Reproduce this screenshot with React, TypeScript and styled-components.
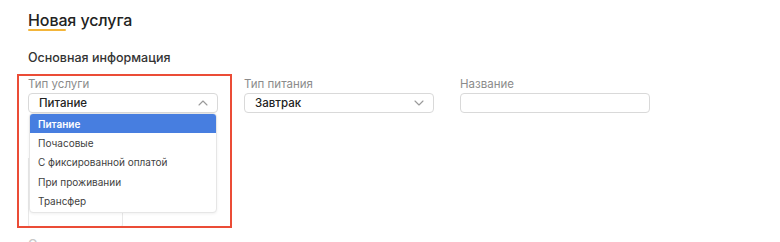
import React from "react";
import styled, { createGlobalStyle } from "styled-components";

const Global = createGlobalStyle`
  html, body { margin: 0; padding: 0; background: #fff; }
  body { font-family: Inter, "Noto Sans", sans-serif; color: #222; overflow: hidden; }
  * { box-sizing: border-box; }
`;

const Page = styled.div`
  position: relative;
  width: 780px;
  height: 242px;
  padding: 10px 28px 0 28px;
  overflow: hidden;
`;

const Title = styled.h1`
  position: relative;
  display: inline-block;
  margin: 0;
  font-size: 16px;
  line-height: 20px;
  font-weight: 500;
  color: #222;
  letter-spacing: -0.1px;
  &::after {
    content: "";
    position: absolute;
    left: 0;
    top: 19px;
    width: 38px;
    height: 1.5px;
    background: #f3b53a;
    border-radius: 1px;
  }
`;

const Section = styled.h2`
  margin: 20px 0 0 0;
  font-size: 12.5px;
  line-height: 16px;
  font-weight: 500;
  color: #333;
`;

const Row = styled.div`
  display: grid;
  grid-template-columns: 190px 190px 190px;
  column-gap: 26px;
  margin-top: 11px;
`;

const Field = styled.div`
  position: relative;
  display: flex;
  flex-direction: column;
`;

const Label = styled.div`
  font-size: 11.5px;
  line-height: 14px;
  color: #8b8b8b;
  margin-bottom: 2px;
`;

const Control = styled.div`
  height: 20px;
  border: 1px solid #d9d9d9;
  border-radius: 4px;
  display: flex;
  align-items: center;
  justify-content: space-between;
  padding: 0 9px 0 10px;
  font-size: 11.5px;
  font-weight: 500;
  color: #222;
  background: #fff;
`;

const Chevron = ({ up }: { up?: boolean }) => (
  <svg width="10" height="6" viewBox="0 0 10 6" fill="none">
    <path
      d={up ? "M1 5 L5 1 L9 5" : "M1 1 L5 5 L9 1"}
      stroke="#9a9a9a"
      strokeWidth="1.1"
      strokeLinecap="round"
      strokeLinejoin="round"
    />
  </svg>
);

const Menu = styled.ul`
  position: absolute;
  top: 36px;
  left: 1px;
  width: 188px;
  margin: 0;
  padding: 0 0 1px 0;
  list-style: none;
  background: #fff;
  border: 1px solid #e6e6e6;
  border-radius: 4px;
  box-shadow: 0 1px 3px rgba(0, 0, 0, 0.06);
  z-index: 2;
`;

const Item = styled.li<{ $active?: boolean }>`
  height: 19.4px;
  display: flex;
  align-items: center;
  padding-left: 8px;
  font-size: 10px;
  font-weight: ${(p) => (p.$active ? 600 : 400)};
  color: ${(p) => (p.$active ? "#fff" : "#3f3f3f")};
  background: ${(p) => (p.$active ? "#477ee0" : "transparent")};
  border-radius: ${(p) => (p.$active ? "3px 3px 0 0" : "0")};
`;

const Behind = styled.div`
  width: 95px;
  height: 70px;
  border: 1px solid #e8e8e8;
  border-top: none;
  border-radius: 0 0 4px 4px;
`;

const NextHeading = styled.div`
  margin-top: 9px;
  font-size: 12.5px;
  line-height: 16px;
  font-weight: 500;
  color: #c8c8c8;
`;

const Highlight = styled.div`
  position: absolute;
  left: 17px;
  top: 74px;
  width: 215px;
  height: 154px;
  border: 2px solid #eb4c36;
  pointer-events: none;
  z-index: 3;
`;

const items = ["Питание", "Почасовые", "С фиксированной оплатой", "При проживании", "Трансфер"];

export default function App() {
  return (
    <>
      <Global />
      <Page>
        <Title>Новая услуга</Title>
        <Section>Основная информация</Section>
        <Row>
          <Field>
            <Label>Тип услуги</Label>
            <Control>
              Питание
              <Chevron up />
            </Control>
            <Menu>
              {items.map((t, i) => (
                <Item key={t} $active={i === 0}>
                  {t}
                </Item>
              ))}
            </Menu>
          </Field>
          <Field>
            <Label>Тип питания</Label>
            <Control>
              Завтрак
              <Chevron />
            </Control>
          </Field>
          <Field>
            <Label>Название</Label>
            <Control />
          </Field>
        </Row>
        <Behind style={{ marginTop: 45 }} />
        <NextHeading>Описание</NextHeading>
        <Highlight />
      </Page>
    </>
  );
}
